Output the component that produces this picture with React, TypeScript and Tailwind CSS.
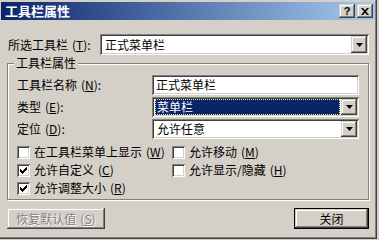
import React from "react";

const sunken =
  "shadow-[inset_1px_1px_0_#808080,inset_-1px_-1px_0_#ffffff,inset_2px_2px_0_#404040,inset_-2px_-2px_0_#d4d0c8]";
const raised =
  "shadow-[inset_-1px_-1px_0_#404040,inset_1px_1px_0_#d4d0c8,inset_-2px_-2px_0_#808080,inset_2px_2px_0_#ffffff]";

function Arrow() {
  return (
    <div className={`w-[16px] h-full bg-[#d4d0c8] ${raised} flex items-center justify-center`}>
      <svg width="7" height="4" viewBox="0 0 7 4">
        <path d="M0 0H7L3.5 4Z" fill="#000" />
      </svg>
    </div>
  );
}

function Combo({ text, selected, className }: { text: string; selected?: boolean; className: string }) {
  return (
    <div className={`${className} bg-white ${sunken} p-[2px] flex`}>
      <div className="flex-1 flex items-center pl-[1px] pr-[1px]">
        {selected ? (
          <div className="h-full w-full bg-[#0a246a] text-white flex items-center pl-[2px] outline outline-1 outline-dotted outline-[#f0e68c] -outline-offset-1">
            {text}
          </div>
        ) : (
          <div className="pl-[2px]">{text}</div>
        )}
      </div>
      <Arrow />
    </div>
  );
}

function Check({ checked }: { checked?: boolean }) {
  return (
    <div className={`w-[13px] h-[13px] bg-white ${sunken} flex items-center justify-center shrink-0`}>
      {checked && (
        <svg width="7" height="7" viewBox="0 0 7 7">
          <path d="M0 2h1v1h1v1h1v-1h1v-1h1v-1h1v-1h1v3h-1v1h-1v1h-1v1h-1v1h-1v-1h-1v-1h-1z" fill="#000" />
        </svg>
      )}
    </div>
  );
}

function CheckRow({ label, k, checked }: { label: string; k: string; checked?: boolean }) {
  return (
    <div className="h-[18px] flex items-center">
      <Check checked={checked} />
      <span className="ml-[4px]">
        {label}
        <span className="ml-[4px]">
          (<u>{k}</u>)
        </span>
      </span>
    </div>
  );
}

export default function App() {
  return (
    <div className="w-[379px] h-[240px] bg-[#d4d0c8] text-[12px] leading-[14px] text-black font-['Noto_Sans_CJK_SC','Noto_Sans',sans-serif] overflow-hidden">
      <div className="w-[377px] h-[239px] pt-[2px] pl-[1px] pr-[2px] shadow-[inset_-1px_-1px_0_#404040,inset_-2px_-2px_0_#808080] flex flex-col">
        {/* title bar */}
        <div className="h-[18px] bg-[linear-gradient(to_right,#0a246a,#a6caf0)] flex items-center pl-[4px] pr-[2px]">
          <span className="text-white font-bold text-[13px] tracking-[0px]">工具栏属性</span>
          <div className="flex-1" />
          <div className="flex gap-[2px]">
            <div className={`w-[16px] h-[14px] bg-[#d4d0c8] ${raised} flex items-center justify-center text-[11px] font-bold leading-none font-['Liberation_Sans',sans-serif]`}>
              ?
            </div>
            <div className={`w-[16px] h-[14px] bg-[#d4d0c8] ${raised} flex items-center justify-center`}>
              <svg width="8" height="7" viewBox="0 0 8 7">
                <path d="M0 0h2l2 2.2L6 0h2L5 3.5 8 7H6L4 4.8 2 7H0l3-3.5z" fill="#000" />
              </svg>
            </div>
          </div>
        </div>

        {/* body */}
        <div className="flex-1 pl-[6px] pr-[6px]">
          <div className="mt-[14px] flex items-center">
            <div className="w-[93px] pl-[1px]">
              所选工具栏<span className="ml-[4px]">(<u>T</u>):</span>
            </div>
            <Combo text="正式菜单栏" className="w-[269px] h-[21px]" />
          </div>

          {/* group box */}
          <div className="relative mt-[8px] w-[362px] h-[137px] border border-[#808080] shadow-[inset_1px_1px_0_#ffffff,1px_1px_0_#ffffff] pt-[11px] pl-[9px] pr-[9px]">
            <div className="absolute left-[6px] top-[-8px] bg-[#d4d0c8] px-[2px]">工具栏属性</div>
            <div className="flex items-center h-[20px]">
              <div className="w-[135px]">
                工具栏名称<span className="ml-[4px]">(<u>N</u>):</span>
              </div>
              <div className={`flex-1 h-[20px] bg-white ${sunken} flex items-center pl-[4px]`}>正式菜单栏</div>
            </div>
            <div className="flex items-center mt-[2px]">
              <div className="w-[135px]">
                类型<span className="ml-[4px]">(<u>E</u>):</span>
              </div>
              <Combo text="菜单栏" selected className="flex-1 h-[20px]" />
            </div>
            <div className="flex items-center mt-[2px]">
              <div className="w-[135px]">
                定位<span className="ml-[4px]">(<u>D</u>):</span>
              </div>
              <Combo text="允许任意" className="flex-1 h-[20px]" />
            </div>
            <div className="mt-[4px] grid grid-cols-[155px_1fr]">
              <CheckRow label="在工具栏菜单上显示" k="W" />
              <CheckRow label="允许移动" k="M" />
              <CheckRow label="允许自定义" k="C" checked />
              <CheckRow label="允许显示/隐藏" k="H" />
              <CheckRow label="允许调整大小" k="R" checked />
            </div>
          </div>

          {/* buttons */}
          <div className="mt-[8px] flex justify-between w-[362px]">
            <div className={`w-[98px] h-[21px] ${raised} flex items-center justify-center text-[#808080] [text-shadow:1px_1px_0_#fff]`}>
              恢复默认值<span className="ml-[4px]">(<u>S</u>)</span>
            </div>
            <div className="w-[75px] h-[21px] border border-black">
              <div className={`w-full h-full ${raised} flex items-center justify-center`}>关闭</div>
            </div>
          </div>
        </div>
      </div>
    </div>
  );
}
